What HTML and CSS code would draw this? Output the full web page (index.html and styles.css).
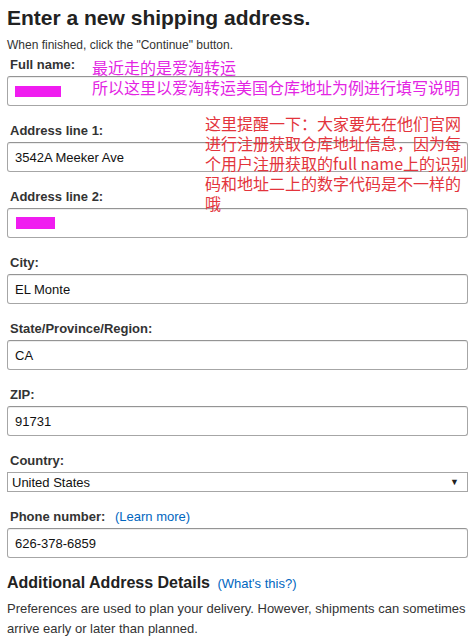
FILE: index.html
```html
<html lang="en">
<head>
  <meta charset="UTF-8">
  <meta name="viewport" content="width=device-width, initial-scale=1.0">
  <title>Enter a new shipping address</title>
  <link rel="stylesheet" href="styles.css">
</head>
<body>
  <div class="page">
    <h1>Enter a new shipping address.</h1>
    <p class="hint">When finished, click the "Continue" button.</p>

    <div class="field">
      <label>Full name:</label>
      <div class="input"><span class="mask mask-name"></span></div>
    </div>

    <div class="field">
      <label>Address line 1:</label>
      <div class="input">3542A Meeker Ave</div>
    </div>

    <div class="field">
      <label>Address line 2:</label>
      <div class="input"><span class="mask mask-addr"></span></div>
    </div>

    <div class="field">
      <label>City:</label>
      <div class="input">EL Monte</div>
    </div>

    <div class="field">
      <label>State/Province/Region:</label>
      <div class="input">CA</div>
    </div>

    <div class="field">
      <label>ZIP:</label>
      <div class="input">91731</div>
    </div>

    <div class="field">
      <label>Country:</label>
      <div class="select">
        <span>United States</span>
        <span class="arrow">&#9660;</span>
      </div>
    </div>

    <div class="field">
      <label>Phone number: <a href="#" class="link">(Learn more)</a></label>
      <div class="input">626-378-6859</div>
    </div>

    <h2>Additional Address Details <a href="#" class="link">(What's this?)</a></h2>
    <p class="note">Preferences are used to plan your delivery. However, shipments can sometimes arrive early or later than planned.</p>

    <div class="remark remark-pink">最近走的是爱淘转运<br>所以这里以爱淘转运美国仓库地址为例进行填写说明</div>
    <div class="remark remark-red">这里提醒一下：大家要先在他们官网<br>进行注册获取仓库地址信息，因为每<br>个用户注册获取的full name上的识别<br>码和地址二上的数字代码是不一样的<br>哦</div>
  </div>
</body>
</html>
```

FILE: styles.css
```css
body {
  margin: 0;
  background-color: #fff;
  font-family: "Liberation Sans", Arial, sans-serif;
  color: #333;
}

.page {
  position: relative;
  padding: 0 3px 0 7px;
}

h1 {
  margin: 6px 0 0;
  font-size: 21px;
  line-height: 24px;
  font-weight: bold;
  color: #222;
}

.hint {
  margin: 7px 0 2px;
  font-size: 12px;
  line-height: 16px;
  color: #333;
}

.field {
  margin-bottom: 15px;
}

.field label {
  display: block;
  padding-left: 3px;
  margin-bottom: 2px;
  font-size: 13px;
  line-height: 19px;
  font-weight: bold;
  color: #333;
}

.link {
  margin-left: 3px;
  font-weight: normal;
  font-size: 13px;
  color: #0066c0;
  text-decoration: none;
}

.field .link {
  margin-left: 6px;
}

.input {
  display: flex;
  align-items: center;
  height: 30px;
  box-sizing: border-box;
  padding: 0 7px;
  border: 1px solid #a6a6a6;
  border-top-color: #949494;
  border-radius: 3px;
  box-shadow: inset 0 1px 0 rgba(0, 0, 0, 0.07);
  font-size: 13px;
  color: #111;
}

.mask {
  display: block;
  background-color: #f01cf0;
}

.mask-name {
  width: 46px;
  height: 11px;
}

.mask-addr {
  width: 39px;
  height: 12px;
  margin-left: 1px;
}

.select {
  display: flex;
  justify-content: space-between;
  align-items: center;
  height: 20px;
  box-sizing: border-box;
  padding: 0 8px 0 4px;
  border: 1px solid #a6a6a6;
  font-size: 13px;
  color: #111;
}

.arrow {
  font-size: 9px;
  color: #222;
}

h2 {
  margin: 14px 0 0;
  font-size: 16px;
  line-height: 20px;
  font-weight: bold;
  color: #222;
}

.note {
  margin: 5px 0 0;
  font-size: 13px;
  line-height: 20px;
  color: #333;
}

.remark {
  position: absolute;
  font-family: "Noto Sans CJK SC", "Liberation Sans", sans-serif;
  font-size: 16px;
  line-height: 20px;
  white-space: nowrap;
}

.remark-pink {
  top: 51px;
  left: 92px;
  color: #e324e3;
}

.remark-red {
  top: 107px;
  left: 205px;
  color: #e3343c;
}
```
